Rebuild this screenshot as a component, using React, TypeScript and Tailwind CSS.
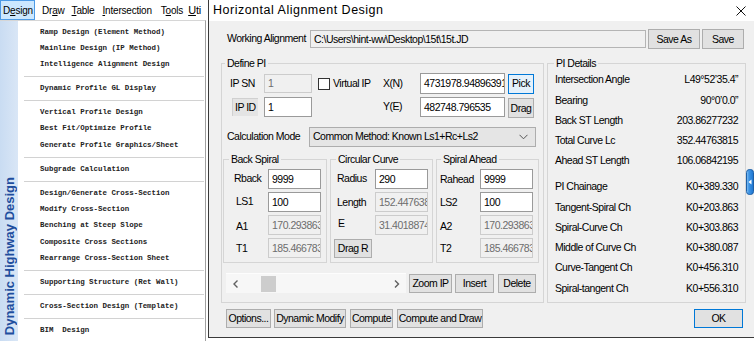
import React from "react";

const MENU: string[][] = [
  ["Ramp Design (Element Method)", "Mainline Design (IP Method)", "Intelligence Alignment Design"],
  ["Dynamic Profile GL Display"],
  ["Vertical Profile Design", "Best Fit/Optimize Profile", "Generate Profile Graphics/Sheet"],
  ["Subgrade Calculation"],
  [
    "Design/Generate Cross-Section",
    "Modify Cross-Section",
    "Benching at Steep Slope",
    "Composite Cross Sections",
    "Rearrange Cross-Section Sheet",
  ],
  ["Supporting Structure (Ret Wall)"],
  ["Cross-Section Design (Template)"],
  ["BIM  Design"],
];

type BtnProps = { w: string; h?: string; children: React.ReactNode; variant?: "normal" | "focus" | "default" };
function Btn({ w, h = "h-[19px]", children, variant = "normal" }: BtnProps) {
  const look =
    variant === "focus"
      ? "border-[#0078d7] bg-[#e5f1fb]"
      : variant === "default"
      ? "border-[#0078d7] bg-[#e1e1e1]"
      : "border-[#adadad] bg-[#e1e1e1]";
  return (
    <div className={`${w} ${h} shrink-0 flex items-center justify-center border ${look} whitespace-nowrap leading-none`}>
      {children}
    </div>
  );
}

type FieldProps = { w: string; h?: string; value: string; disabled?: boolean; readOnly?: boolean };
function Field({ w, h = "h-[20px]", value, disabled = false, readOnly = false }: FieldProps) {
  const look = disabled
    ? "border-[#cccccc] bg-[#f0f0f0] text-[#6d6d6d]"
    : readOnly
    ? "border-[#b4b4b4] bg-[#f0f0f0] text-black"
    : "border-[#9a9a9a] bg-white text-black";
  return (
    <div className={`${w} ${h} shrink-0 flex items-center overflow-hidden whitespace-nowrap pl-[3px] border ${look} leading-none`}>
      {value}
    </div>
  );
}

function Row({ label, labelCls, children }: { label: string; labelCls: string; children: React.ReactNode }) {
  return (
    <div className="h-[20px] flex items-center">
      <div className={`${labelCls} shrink-0`}>{label}</div>
      {children}
    </div>
  );
}

const PI_TOP: [string, string][] = [
  ["Intersection Angle", "L49°52’35.4”"],
  ["Bearing", "90°0’0.0”"],
  ["Back ST Length", "203.86277232"],
  ["Total Curve Lc", "352.44763815"],
  ["Ahead ST Length", "106.06842195"],
];
const PI_BOTTOM: [string, string][] = [
  ["PI Chainage", "K0+389.330"],
  ["Tangent-Spiral Ch", "K0+203.863"],
  ["Spiral-Curve Ch", "K0+303.863"],
  ["Middle of Curve Ch", "K0+380.087"],
  ["Curve-Tangent Ch", "K0+456.310"],
  ["Spiral-tangent Ch", "K0+556.310"],
];

function Chevron({ dir }: { dir: "left" | "right" | "down" }) {
  if (dir === "down")
    return (
      <svg width="9" height="6" viewBox="0 0 9 6">
        <polyline points="0.5,0.8 4.5,4.8 8.5,0.8" fill="none" stroke="#555" strokeWidth="1" />
      </svg>
    );
  const pts = dir === "left" ? "4.5,0.5 1,4 4.5,7.5" : "1,0.5 4.5,4 1,7.5";
  return (
    <svg width="6" height="8" viewBox="0 0 6 8">
      <polyline points={pts} fill="none" stroke="#606060" strokeWidth="1.4" />
    </svg>
  );
}

export default function App() {
  return (
    <div className="relative w-[754px] h-[341px] bg-white flex overflow-hidden">
      {/* Left: menu */}
      <div className="w-[208px] shrink-0 flex flex-col">
        <div className="w-[206px] h-[20px] flex items-center overflow-hidden whitespace-nowrap bg-white font-['Liberation_Sans',Arial,sans-serif] text-[10px] tracking-[-0.2px] text-black">
          <div className="w-[35px] h-[20px] shrink-0 flex items-center pl-[2px] border border-[#4d9be6] bg-[#cce8ff]">
            D<span className="underline">e</span>sign
          </div>
          <span className="ml-[7px]">
            Dr<span className="underline">a</span>w
          </span>
          <span className="ml-[7px]">
            <span className="underline">T</span>able
          </span>
          <span className="ml-[8px]">
            <span className="underline">I</span>ntersection
          </span>
          <span className="ml-[9px]">
            T<span className="underline">o</span>ols
          </span>
          <span className="ml-[5px] text-[11px]">
            <span className="underline">U</span>ti
          </span>
        </div>
        <div className="w-[206px] h-[321px] flex border-t border-r border-t-[#d6d6d6] border-r-[#a0a0a0] bg-white">
          <div className="w-[18px] shrink-0 bg-gradient-to-r from-[#c9dcf2] to-[#d9e6f6] flex flex-col justify-end items-center pb-[6px]">
            <div className="[writing-mode:vertical-rl] rotate-180 font-['Liberation_Sans',Arial,sans-serif] font-bold text-[13px] leading-none text-[#1f4e9e] whitespace-nowrap">
              Dynamic Highway Design
            </div>
          </div>
          <div className="flex-1 flex flex-col pt-[3px] font-['Liberation_Mono',monospace] font-bold text-[7.45px] text-[#222]">
            {MENU.map((group, gi) => (
              <React.Fragment key={gi}>
                {gi > 0 && (
                  <div className="h-[8px] flex items-center pl-[6px] pr-[1px]">
                    <div className="h-px w-full bg-[#d2d2d2]" />
                  </div>
                )}
                {group.map((item) => (
                  <div key={item} className="h-[16.2px] flex items-center pl-[22px] whitespace-pre">
                    {item}
                  </div>
                ))}
              </React.Fragment>
            ))}
          </div>
        </div>
      </div>

      {/* Dialog */}
      <div className="w-[546px] h-[338px] shrink-0 flex flex-col border-l border-b border-[#3a3a3a] font-['Liberation_Sans',Arial,sans-serif] text-[10.5px] tracking-[-0.5px] text-black">
        <div className="h-[21px] shrink-0 flex items-center justify-between bg-white pl-[4px] pr-[8px]">
          <span className="text-[12.5px] tracking-[0.5px]">Horizontal Alignment Design</span>
          <svg width="10" height="10" viewBox="0 0 10 10">
            <line x1="0.5" y1="0.5" x2="9.5" y2="9.5" stroke="#111" strokeWidth="1" />
            <line x1="9.5" y1="0.5" x2="0.5" y2="9.5" stroke="#111" strokeWidth="1" />
          </svg>
        </div>

        <div className="flex-1 bg-[#f0f0f0] pl-[12px] pr-[8px] pt-[8px] flex flex-col">
          {/* Working alignment */}
          <div className="h-[20px] flex items-center">
            <div className="ml-[6px] w-[83px] shrink-0">Working Alignment</div>
            <Field w="w-[336px]" h="h-[18px]" value="C:\Users\hint-ww\Desktop\15t\15t.JD" readOnly />
            <div className="ml-[2px]">
              <Btn w="w-[52px]" h="h-[20px]">Save As</Btn>
            </div>
            <div className="ml-[2px]">
              <Btn w="w-[42px]" h="h-[20px]">Save</Btn>
            </div>
          </div>

          {/* Groups */}
          <div className="mt-[7px] flex gap-[3px]">
            <fieldset className="w-[323px] h-[247px] shrink-0 border border-[#d5d5d5]">
              <legend className="ml-[3px] px-[2px] leading-[14px]">Define PI</legend>

              {/* Row A */}
              <div className="mt-[3px] h-[21px] flex items-center">
                <div className="w-[42px] shrink-0 pl-[8px]">IP SN</div>
                <Field w="w-[48px]" h="h-[19px]" value="1" disabled />
                <div className="ml-[6px] w-[12px] h-[12px] shrink-0 border border-[#333] bg-white" />
                <div className="ml-[3px] w-[50px] shrink-0">Virtual IP</div>
                <div className="w-[37px] shrink-0">X(N)</div>
                <Field w="w-[85px]" h="h-[21px]" value="4731978.94896391" />
                <div className="ml-[3px]">
                  <Btn w="w-[26px]" h="h-[20px]" variant="focus">
                    Pick
                  </Btn>
                </div>
              </div>

              {/* Row B */}
              <div className="mt-[2px] h-[22px] flex items-center">
                <div className="ml-[10px] w-[26px] h-[18px] shrink-0 flex items-center pl-[2px] bg-[#e4e4e4] border-t border-l border-[#d0d0d0]">
                  IP ID
                </div>
                <div className="ml-[6px]">
                  <Field w="w-[48px]" value="1" />
                </div>
                <div className="w-[71px] shrink-0" />
                <div className="w-[37px] shrink-0">Y(E)</div>
                <Field w="w-[85px]" value="482748.796535" />
                <div className="ml-[3px] self-end">
                  <Btn w="w-[26px]" h="h-[20px]">Drag</Btn>
                </div>
              </div>

              {/* Row C */}
              <div className="mt-[9px] h-[20px] flex items-center">
                <div className="ml-[5px] w-[82px] shrink-0">Calculation Mode</div>
                <div className="w-[227px] h-[20px] shrink-0 flex items-center justify-between pl-[3px] pr-[7px] border border-[#adadad] bg-[#e5e5e5]">
                  <span className="whitespace-nowrap">Common Method: Known Ls1+Rc+Ls2</span>
                  <Chevron dir="down" />
                </div>
              </div>

              {/* Row D */}
              <div className="mt-[5px] ml-[1px] flex">
                <fieldset className="w-[104px] h-[111px] shrink-0 border border-[#d5d5d5]">
                  <legend className="ml-[5px] px-[2px] leading-[14px]">Back Spiral</legend>
                  <div className="mt-[3px] flex flex-col gap-[3px]">
                    <Row label="Rback" labelCls="w-[44px] pl-[10px]">
                      <Field w="w-[53px]" value="9999" />
                    </Row>
                    <Row label="LS1" labelCls="w-[44px] pl-[12px]">
                      <Field w="w-[53px]" value="100" />
                    </Row>
                    <Row label="A1" labelCls="w-[44px] pl-[12px] pt-[4px]">
                      <Field w="w-[53px]" value="170.29386325" disabled />
                    </Row>
                    <Row label="T1" labelCls="w-[44px] pl-[12px] pt-[2px]">
                      <Field w="w-[53px]" value="185.46678321" disabled />
                    </Row>
                  </div>
                </fieldset>
                <fieldset className="ml-[3px] w-[103px] h-[111px] shrink-0 border border-[#d5d5d5]">
                  <legend className="ml-[5px] px-[2px] leading-[14px]">Circular Curve</legend>
                  <div className="mt-[3px] flex flex-col gap-[3px]">
                    <Row label="Radius" labelCls="w-[44px] pl-[6px]">
                      <Field w="w-[53px]" value="290" />
                    </Row>
                    <Row label="Length" labelCls="w-[44px] pl-[6px] pt-[2px]">
                      <Field w="w-[53px]" value="152.44763815" disabled />
                    </Row>
                    <Row label="E" labelCls="w-[44px] pl-[7px] pb-[2px]">
                      <Field w="w-[53px]" value="31.40188742" disabled />
                    </Row>
                    <div className="h-[20px] flex items-center pl-[3px]">
                      <Btn w="w-[38px]" h="h-[19px]">Drag R</Btn>
                    </div>
                  </div>
                </fieldset>
                <fieldset className="ml-[3px] w-[103px] h-[111px] shrink-0 border border-[#d5d5d5]">
                  <legend className="ml-[4px] px-[2px] leading-[14px]">Spiral Ahead</legend>
                  <div className="mt-[3px] flex flex-col gap-[3px]">
                    <Row label="Rahead" labelCls="w-[43px] pl-[3px] pt-[2px]">
                      <Field w="w-[53px]" value="9999" />
                    </Row>
                    <Row label="LS2" labelCls="w-[43px] pl-[3px] pt-[2px]">
                      <Field w="w-[53px]" value="100" />
                    </Row>
                    <Row label="A2" labelCls="w-[43px] pl-[3px] pt-[4px]">
                      <Field w="w-[53px]" value="170.29386325" disabled />
                    </Row>
                    <Row label="T2" labelCls="w-[43px] pl-[3px] pt-[2px]">
                      <Field w="w-[53px]" value="185.46678321" disabled />
                    </Row>
                  </div>
                </fieldset>
              </div>

              {/* Row E */}
              <div className="mt-[10px] h-[20px] flex items-center">
                <div className="ml-[4px] w-[180px] h-[20px] shrink-0 flex items-center bg-[#f7f7f7] border-t border-[#fdfdfd]">
                  <div className="w-[17px] flex justify-center pl-[2px]">
                    <Chevron dir="left" />
                  </div>
                  <div className="ml-[18px] w-[15px] h-[16px] bg-[#cdcdcd]" />
                  <div className="flex-1" />
                  <div className="w-[17px] flex justify-center pr-[2px]">
                    <Chevron dir="right" />
                  </div>
                </div>
                <div className="ml-[3px]">
                  <Btn w="w-[43px]">Zoom IP</Btn>
                </div>
                <div className="ml-[3px]">
                  <Btn w="w-[39px]">Insert</Btn>
                </div>
                <div className="ml-[4px]">
                  <Btn w="w-[38px]">Delete</Btn>
                </div>
              </div>
            </fieldset>

            <fieldset className="w-[199px] h-[247px] shrink-0 border border-[#d5d5d5]">
              <legend className="ml-[6px] px-[2px] leading-[14px]">PI Details</legend>
              {PI_TOP.map(([k, v]) => (
                <div key={k} className="h-[20.3px] flex items-center justify-between pl-[7px] pr-[7px]">
                  <span>{k}</span>
                  <span>{v}</span>
                </div>
              ))}
              <div className="h-[5.5px]" />
              {PI_BOTTOM.map(([k, v]) => (
                <div key={k} className="h-[20.3px] flex items-center justify-between pl-[7px] pr-[7px]">
                  <span>{k}</span>
                  <span>{v}</span>
                </div>
              ))}
            </fieldset>
          </div>

          {/* Bottom buttons */}
          <div className="mt-[6px] flex items-center">
            <div className="ml-[5px]">
              <Btn w="w-[45px]">Options...</Btn>
            </div>
            <div className="ml-[3px]">
              <Btn w="w-[72px]">Dynamic Modify</Btn>
            </div>
            <div className="ml-[4px]">
              <Btn w="w-[43px]">Compute</Btn>
            </div>
            <div className="ml-[4px]">
              <Btn w="w-[86px]">Compute and Draw</Btn>
            </div>
            <div className="flex-1" />
            <div className="mr-[3px]">
              <Btn w="w-[49px]" variant="default">
                OK
              </Btn>
            </div>
          </div>
        </div>
      </div>

      {/* Side handle overlay */}
      <div className="absolute left-[746px] top-[169px]">
        <svg width="8" height="26" viewBox="0 0 8 26">
          <defs>
            <linearGradient id="tabg" x1="0" y1="0" x2="1" y2="0">
              <stop offset="0" stopColor="#8cc6f5" />
              <stop offset="0.35" stopColor="#3d94e4" />
              <stop offset="1" stopColor="#1c73cf" />
            </linearGradient>
          </defs>
          <rect x="0.5" y="0.5" width="7" height="25" rx="3" fill="url(#tabg)" stroke="#1d5fa6" />
          <path d="M5.5 10.5 L2.5 13 L5.5 15.5 Z" fill="#ffffff" />
        </svg>
      </div>
    </div>
  );
}
